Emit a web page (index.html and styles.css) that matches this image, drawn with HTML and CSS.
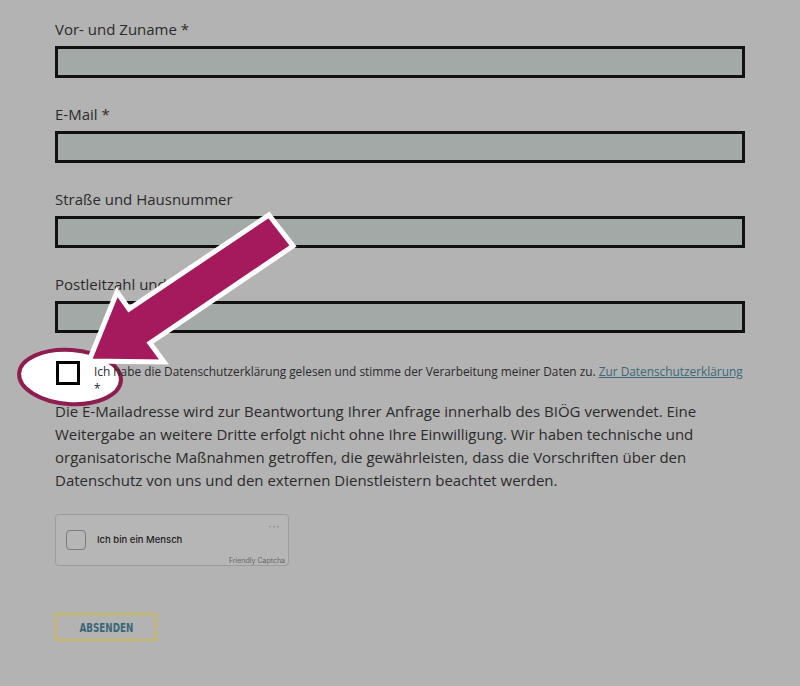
FILE: index.html
```html
<!DOCTYPE html>
<html lang="de">
  <head>
    <meta charset="UTF-8" />
    <meta name="viewport" content="width=device-width, initial-scale=1.0" />
    <title>Kontakt</title>
    <link rel="stylesheet" href="styles.css">
  </head>
  <body>
    <form class="contact">
      <div class="field">
        <label for="name">Vor- und Zuname *</label>
        <input id="name" type="text" />
      </div>
      <div class="field">
        <label for="mail">E-Mail *</label>
        <input id="mail" type="email" />
      </div>
      <div class="field">
        <label for="street">Straße und Hausnummer</label>
        <input id="street" type="text" />
      </div>
      <div class="field">
        <label for="city">Postleitzahl und Ort</label>
        <input id="city" type="text" />
      </div>

      <div class="consent">
        <svg class="spot" width="112" height="64" viewBox="0 0 112 64">
          <ellipse cx="56" cy="32" rx="51" ry="27" transform="rotate(4 56 32)" />
        </svg>
        <span class="box"></span>
        <div class="consent-text">
          Ich habe die Datenschutzerklärung gelesen und stimme der Verarbeitung meiner Daten zu.
          <a href="#">Zur Datenschutzerklärung</a>
          <div>*</div>
        </div>
      </div>

      <p class="note">
        Die E-Mailadresse wird zur Beantwortung Ihrer Anfrage innerhalb des BIÖG verwendet. Eine
        Weitergabe an weitere Dritte erfolgt nicht ohne Ihre Einwilligung. Wir haben technische und
        organisatorische Maßnahmen getroffen, die gewährleisten, dass die Vorschriften über den
        Datenschutz von uns und den externen Dienstleistern beachtet werden.
      </p>

      <div class="captcha">
        <span class="captcha-box"></span>
        <span class="captcha-label">Ich bin ein Mensch</span>
        <span class="captcha-dots">•••</span>
        <span class="captcha-brand">Friendly Captcha</span>
      </div>

      <button type="button" class="send"><span>ABSENDEN</span></button>
    </form>

    <!-- annotation arrow -->
    <svg class="arrow" width="800" height="686" viewBox="0 0 800 686">
      <polygon points="269,215 293,246 150,343 164,362 89,361 117,292 129,309" />
    </svg>
  </body>
</html>
```

FILE: styles.css
```css
body {
  margin: 0;
  background: #b3b3b3;
  font-family: "Open Sans", Arial, sans-serif;
  color: #2b2b2b;
}
.contact {
  position: relative;
  width: 690px;
  padding: 18px 0 40px 55px;
}
.field {
  margin-bottom: 25px;
}
.field label {
  display: block;
  font-size: 15px;
  line-height: 22px;
  margin-bottom: 6px;
}
.field input {
  display: block;
  box-sizing: border-box;
  width: 690px;
  height: 32px;
  margin: 0;
  border: 3px solid #111;
  background: #a2a9a7;
}
.consent {
  position: relative;
  display: flex;
  align-items: flex-start;
  padding-top: 3px;
}
.spot {
  position: absolute;
  left: -41px;
  top: -13px;
}
.spot ellipse {
  fill: #fff;
  stroke: #8e1d50;
  stroke-width: 4;
}
.box {
  position: relative;
  box-sizing: border-box;
  width: 24px;
  height: 24px;
  flex: none;
  margin-left: 1px;
  border: 3px solid #000;
  background: #fff;
}
.consent-text {
  position: relative;
  margin-left: 14px;
  margin-top: 2px;
  font-size: 11.85px;
  line-height: 17px;
}
.consent-text a {
  color: #3c6877;
}
.note {
  margin: 3px 0 0;
  font-size: 15px;
  line-height: 23px;
}
.captcha {
  position: relative;
  box-sizing: border-box;
  width: 234px;
  height: 52px;
  margin-top: 22px;
  border: 1px solid #9c9c9c;
  border-radius: 4px;
  background: #b6b6b6;
  font-family: Inter, "Liberation Sans", sans-serif;
}
.captcha-box {
  position: absolute;
  left: 10px;
  top: 15px;
  box-sizing: border-box;
  width: 20px;
  height: 20px;
  border: 1px solid #7c7c7c;
  border-radius: 4px;
}
.captcha-label {
  position: absolute;
  left: 41px;
  top: 19px;
  font-size: 9.5px;
  font-weight: 500;
  color: #222;
}
.captcha-dots {
  position: absolute;
  right: 8px;
  top: 8px;
  font-size: 5px;
  letter-spacing: 1px;
  color: #8a8a8a;
}
.captcha-brand {
  position: absolute;
  right: 3px;
  bottom: 0;
  font-size: 7px;
  color: #666;
}
.send {
  display: block;
  margin-top: 47px;
  width: 102px;
  height: 28px;
  padding: 0;
  border: 2px solid #c8b85e;
  background: #b3b3b3;
  color: #3b6676;
  font-family: "DejaVu Sans Condensed", "DejaVu Sans", sans-serif;
  font-weight: bold;
  font-size: 12.5px;
}
.send span {
  display: inline-block;
  transform: scaleX(0.78);
}
.arrow {
  position: absolute;
  left: 0;
  top: 0;
  pointer-events: none;
}
.arrow polygon {
  fill: #a51a5c;
  stroke: #fff;
  stroke-width: 5;
  stroke-linejoin: miter;
}
```
